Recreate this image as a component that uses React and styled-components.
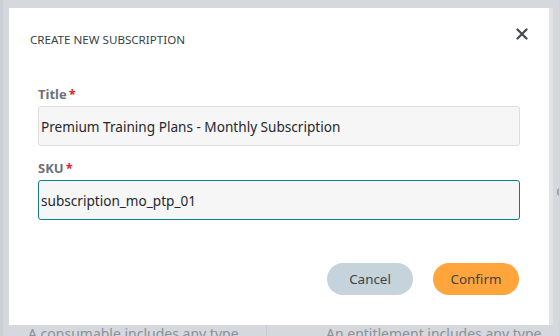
import React from "react";
import styled, { createGlobalStyle } from "styled-components";

const GlobalStyle = createGlobalStyle`
  html, body {
    margin: 0;
    padding: 0;
    width: 559px;
    height: 336px;
    overflow: hidden;
    background: #d5d8dd;
    font-family: "Noto Sans", "Open Sans", sans-serif;
  }
`;

export default function App() {
  return (
    <>
      <GlobalStyle />
      <Backdrop>
        <BackColumn>
          <BackText>A consumable includes any type</BackText>
        </BackColumn>
        <BackColumn $divided>
          <BackText>An entitlement includes any type</BackText>
        </BackColumn>
        <EdgeLetter>c</EdgeLetter>
      </Backdrop>
      <Dialog role="dialog">
        <Header>
          <DialogTitle>Create new subscription</DialogTitle>
          <CloseButton aria-label="Close">
            <svg width="12" height="12" viewBox="0 0 12 12">
              <path
                d="M1.5 1.5 L10.5 10.5 M10.5 1.5 L1.5 10.5"
                stroke="#454b55"
                strokeWidth="2.3"
                strokeLinecap="round"
              />
            </svg>
          </CloseButton>
        </Header>
        <Body>
          <Field>
            <Label>
              Title<Required>*</Required>
            </Label>
            <Input defaultValue="Premium Training Plans - Monthly Subscription" />
          </Field>
          <Field>
            <Label>
              SKU<Required>*</Required>
            </Label>
            <Input $focused defaultValue="subscription_mo_ptp_01" />
          </Field>
        </Body>
        <Footer>
          <Button $variant="cancel">Cancel</Button>
          <Button $variant="confirm">Confirm</Button>
        </Footer>
      </Dialog>
    </>
  );
}

const Backdrop = styled.div`
  position: relative;
  width: 559px;
  height: 336px;
  display: grid;
  grid-template-columns: 263px 1fr;
  align-items: end;
  border-left: 3px solid #cbced4;
  box-sizing: border-box;
`;

const BackColumn = styled.div`
  display: flex;
  align-items: flex-end;
  height: 40px;
  padding-left: ${(p) => (p.$divided ? "59px" : "25px")};
  border-left: ${(p) => (p.$divided ? "1px solid #c6c9cf" : "none")};
`;

const BackText = styled.div`
  font-size: 14px;
  line-height: 16px;
  color: #8b9099;
  margin-bottom: -6px;
  white-space: nowrap;
`;

const EdgeLetter = styled.span`
  position: absolute;
  right: -4px;
  top: 181px;
  font-size: 14px;
  color: #8b9099;
`;

const Dialog = styled.div`
  position: absolute;
  top: 8px;
  left: 9px;
  width: 540px;
  height: 317px;
  background: #fff;
  box-sizing: border-box;
  display: flex;
  flex-direction: column;
  box-shadow: 4px 0 0 #e1e3e7;
`;

const Header = styled.div`
  display: flex;
  justify-content: space-between;
  align-items: flex-start;
  padding: 24px 21px 0 21px;
`;

const DialogTitle = styled.h2`
  margin: 0;
  font-size: 11.6px;
  line-height: 16px;
  font-weight: 400;
  text-transform: uppercase;
  color: #3a3f47;
`;

const CloseButton = styled.button`
  border: none;
  background: none;
  padding: 0;
  margin-top: -4px;
  width: 12px;
  height: 12px;
  display: flex;
  cursor: pointer;
`;

const Body = styled.div`
  display: flex;
  flex-direction: column;
  gap: 14px;
  padding: 38px 29px 0 29px;
`;

const Field = styled.div`
  display: flex;
  flex-direction: column;
  gap: 4px;
`;

const Label = styled.label`
  font-size: 13px;
  line-height: 16px;
  font-weight: 700;
  color: #6c717a;
`;

const Required = styled.span`
  color: #e0262f;
  margin-left: 2px;
`;

const Input = styled.input`
  box-sizing: border-box;
  width: 100%;
  height: 40px;
  padding: 0 2px;
  font-family: inherit;
  font-size: 13.6px;
  color: #24282e;
  background: #f6f6f6;
  border: ${(p) => (p.$focused ? "1.5px solid #167b86" : "1px solid #dedede")};
  border-radius: 3px;
  outline: none;
`;

const Footer = styled.div`
  margin-top: auto;
  display: flex;
  justify-content: flex-end;
  gap: 20px;
  padding: 0 30px 30px 0;
`;

const Button = styled.button`
  width: 86px;
  height: 32px;
  border: none;
  border-radius: 16px;
  font-family: inherit;
  font-size: 13.4px;
  color: #3d434b;
  background: ${(p) => (p.$variant === "confirm" ? "#ffa53b" : "#c5d3da")};
  cursor: pointer;
`;
